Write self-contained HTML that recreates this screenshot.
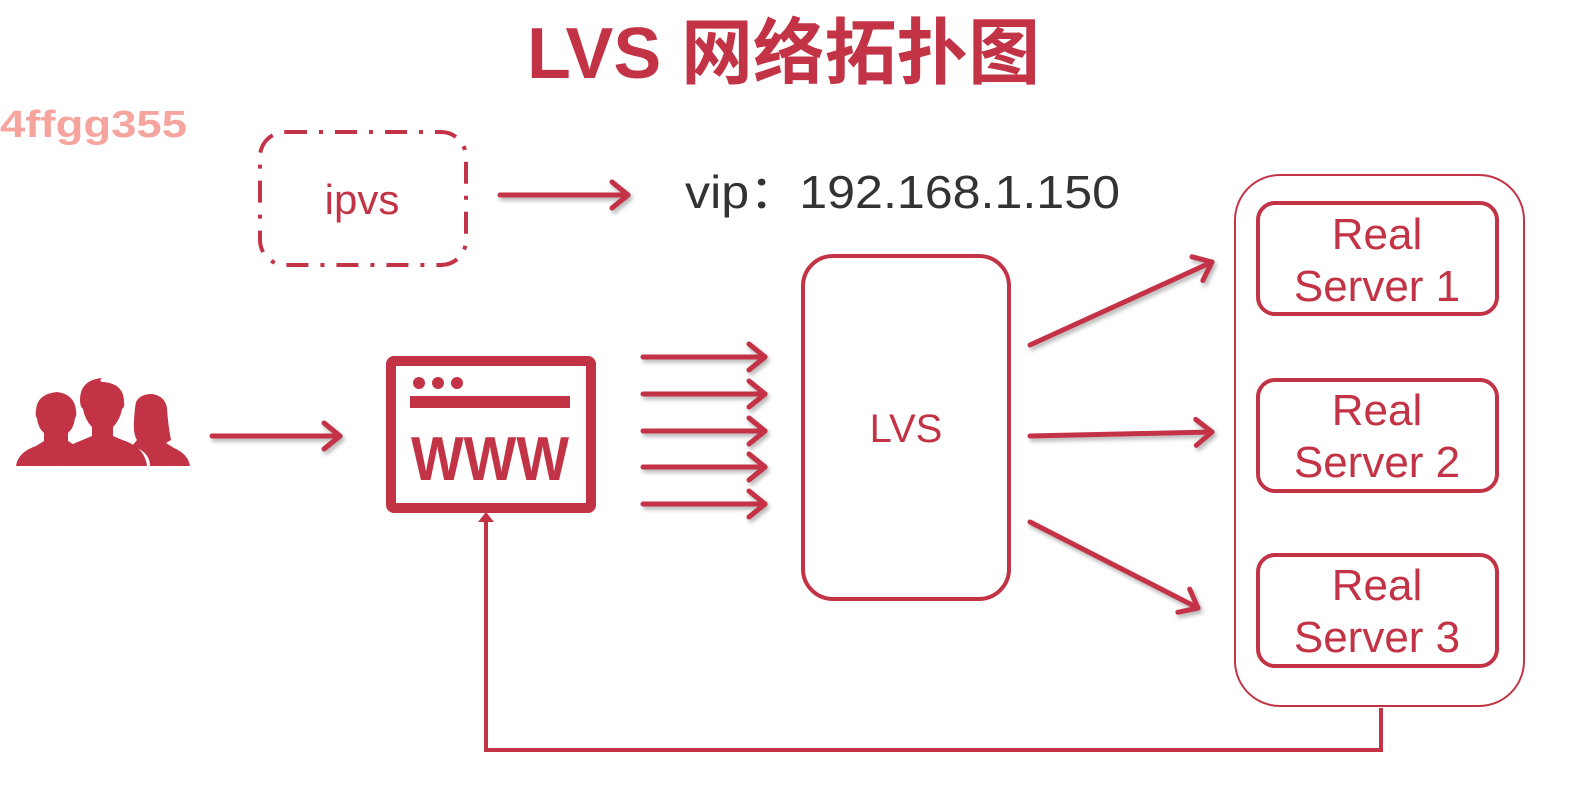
<!DOCTYPE html>
<html><head><meta charset="utf-8"><style>
html,body{margin:0;padding:0;background:#fff;width:1590px;height:802px;overflow:hidden}
svg{display:block}
text{font-family:"Liberation Sans","Noto Sans CJK SC",sans-serif}
</style></head><body>
<svg width="1590" height="802" viewBox="0 0 1590 802" xmlns="http://www.w3.org/2000/svg">
<defs>
<marker id="a" markerWidth="12" markerHeight="12" refX="9" refY="6" orient="auto" markerUnits="userSpaceOnUse" viewBox="0 0 12 12" overflow="visible">
<path d="M-7,-7 L9,6 L-7,19" fill="none" stroke="#c33346" stroke-width="5" stroke-linecap="round" stroke-linejoin="round"/>
</marker>
<filter id="sh" x="-10%" y="-50%" width="130%" height="300%"><feDropShadow dx="2" dy="3" stdDeviation="2" flood-color="#000" flood-opacity="0.3"/></filter>
</defs>
<text x="527" y="78" font-size="72" font-weight="bold" fill="#c33346" textLength="513" lengthAdjust="spacingAndGlyphs">LVS 网络拓扑图</text>
<text x="0" y="137" font-size="38" font-weight="bold" fill="#f6a59e" textLength="187" lengthAdjust="spacingAndGlyphs">4ffgg355</text>

<rect x="260" y="132" width="206" height="133" rx="25" fill="none" stroke="#c33346" stroke-width="4" stroke-dasharray="22 12 4 12"/>
<text x="362" y="214" font-size="42" fill="#c33346" text-anchor="middle">ipvs</text>
<text x="685" y="208" font-size="46" fill="#333" textLength="435" lengthAdjust="spacingAndGlyphs">vip：192.168.1.150</text>

<g stroke="#c33346" stroke-width="5" fill="none" stroke-linecap="round" filter="url(#sh)">
<line x1="500" y1="195" x2="628" y2="195" marker-end="url(#a)"/>
<line x1="212" y1="436" x2="340" y2="436" marker-end="url(#a)"/>
<line x1="643" y1="357" x2="765" y2="357" marker-end="url(#a)"/>
<line x1="643" y1="394" x2="765" y2="394" marker-end="url(#a)"/>
<line x1="643" y1="431" x2="765" y2="431" marker-end="url(#a)"/>
<line x1="643" y1="467" x2="765" y2="467" marker-end="url(#a)"/>
<line x1="643" y1="504" x2="765" y2="504" marker-end="url(#a)"/>
<line x1="1030" y1="345" x2="1212" y2="262" marker-end="url(#a)"/>
<line x1="1030" y1="436" x2="1212" y2="432" marker-end="url(#a)"/>
<line x1="1030" y1="522" x2="1198" y2="608" marker-end="url(#a)"/>
</g>

<rect x="803" y="256" width="206" height="343" rx="30" fill="none" stroke="#c33346" stroke-width="4"/>
<text x="906" y="442" font-size="40" fill="#c33346" text-anchor="middle">LVS</text>

<rect x="1235" y="175" width="289" height="531" rx="45" fill="none" stroke="#c33346" stroke-width="2"/>
<g fill="none" stroke="#c33346" stroke-width="4">
<rect x="1258" y="203" width="239" height="111" rx="17"/>
<rect x="1258" y="380" width="239" height="111" rx="17"/>
<rect x="1258" y="555" width="239" height="111" rx="17"/>
</g>
<g fill="#c33346" font-size="44" text-anchor="middle">
<text x="1377" y="249">Real</text><text x="1377" y="301">Server 1</text>
<text x="1377" y="425">Real</text><text x="1377" y="477">Server 2</text>
<text x="1377" y="600">Real</text><text x="1377" y="652">Server 3</text>
</g>

<path d="M1381,708 V750 H486 V522" fill="none" stroke="#c33346" stroke-width="4"/>
<path d="M478,522 L486,512 L494,522 Z" fill="#c33346"/>

<rect x="391" y="361" width="200" height="147" rx="3" fill="none" stroke="#c33346" stroke-width="10"/>
<g fill="#c33346">
<circle cx="419" cy="383" r="6"/><circle cx="438" cy="383" r="6"/><circle cx="457" cy="383" r="6"/>
<rect x="410" y="396" width="160" height="12"/>
<text x="490" y="480" font-size="62" font-weight="bold" text-anchor="middle" textLength="158" lengthAdjust="spacingAndGlyphs">WWW</text>
</g>

<g fill="#c33346">
<path d="M16,466 Q18,452 36,446 L44,441 V433 Q38,428 37,418 Q35,416 36,410 Q37,394 57,392 Q74,394 76,410 Q77,416 75,418 Q74,428 68,433 V441 L76,446 Q60,452 58,466 Z"/>
<path d="M58,466 Q60,448 80,441 L92,436 V427 Q85,420 83,409 Q80,407 80,400 Q80,380 102,378 Q98,382 104,382 Q124,384 124,402 Q125,407 122,409 Q120,420 113,427 V436 L125,441 Q145,448 147,466 Z"/>
<path d="M150,466 Q150,454 137,448 L132,446 L137,440 Q133,434 134,420 Q135,406 136,402 Q140,394 152,394 Q165,396 167,408 Q168,425 171,440 L166,443 L174,448 Q188,454 190,466 Z"/>
</g>
</svg>
</body></html>
